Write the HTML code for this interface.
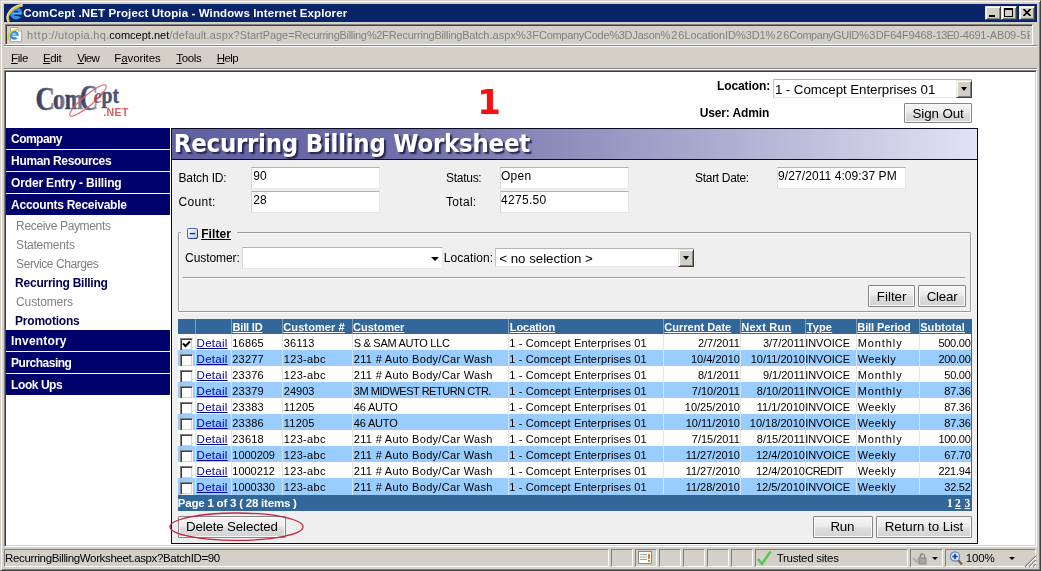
<!DOCTYPE html>
<html><head><meta charset="utf-8"><title>ComCept .NET Project Utopia - Windows Internet Explorer</title>
<style>
*{box-sizing:border-box;margin:0;padding:0}
html,body{width:1041px;height:571px;overflow:hidden;background:#d4d0c8;font-family:"Liberation Sans","DejaVu Sans",sans-serif;}
#win{position:absolute;left:0;top:0;width:1041px;height:571px;background:#d4d0c8;overflow:hidden}
.t{position:absolute;white-space:pre}
#tx{position:absolute;left:0;top:0;width:1041px;height:571px;will-change:transform}
.a{position:absolute}
.mi{position:absolute;left:6px;width:164px;height:21px;background:#00006c}
.tb{position:absolute;background:#fff;border:1px solid;border-color:#b2b2b2 #e6e6e6 #e6e6e6 #d6d6d6}
.btn{position:absolute;border:1px solid #868686;border-radius:1px;background:linear-gradient(#f6f6f6 0%,#ececec 45%,#dedede 55%,#d2d2d2 100%);box-shadow:inset 0 0 0 1px #fafafa}
.sunk{position:absolute;border:1px solid;border-color:#808080 #fff #fff #808080}
.cb{position:absolute;width:13px;height:13px;background:#fff;border:1px solid;border-color:#808080 #f4f4f4 #f4f4f4 #808080;box-shadow:inset 1px 1px 0 #404040,inset -1px -1px 0 #d4d0c8}
.ddb{position:absolute;background:#d4d0c8;border:1px solid;border-color:#e8e6e0 #404040 #404040 #e8e6e0;box-shadow:inset 1px 1px 0 #fff,inset -1px -1px 0 #808080}
.arr{position:absolute;width:0;height:0;border-left:4px solid transparent;border-right:4px solid transparent;border-top:4px solid #000}
</style></head><body>
<div id="win">
<div class="a" style="left:0px;top:0px;width:1041px;height:571px;border:1px solid;border-color:#d4d0c8 #404040 #404040 #d4d0c8;box-shadow:inset 1px 1px 0 #fff,inset -1px -1px 0 #808080"></div>
<div class="a" style="left:4px;top:4px;width:1033px;height:18px;background:#0a246a"></div>
<svg class="a" style="left:5px;top:4px" width="19" height="18" viewBox="5 4 19 18"><circle cx="16.2" cy="13.4" r="4.4" fill="none" stroke="#2f8ee6" stroke-width="3.4"/><rect x="12.5" y="12.4" width="8.5" height="2.2" fill="#56b0f6"/><path d="M17 14.8 H23 V18 L19 16.5Z" fill="#0a246a"/><path d="M8.2 20.6 C5.8 14.5 11.5 7 21.6 5.4" fill="none" stroke="#f4e9a0" stroke-width="2.6" stroke-linecap="round"/><path d="M8.6 20.4 C6.6 14.8 12 7.6 21.4 6" fill="none" stroke="#e8b820" stroke-width="1.3" stroke-linecap="round"/></svg>
<div class="ddb" style="left:985px;top:6px;width:16px;height:14px;"></div>
<div class="ddb" style="left:1001px;top:6px;width:16px;height:14px;"></div>
<div class="ddb" style="left:1019px;top:6px;width:16px;height:14px;"></div>
<div class="a" style="left:989px;top:15px;width:6px;height:2px;background:#000"></div>
<div class="a" style="left:1004px;top:8px;width:9px;height:9px;border:1px solid #000;border-top-width:2px"></div>
<svg class="a" style="left:1023px;top:9px" width="8" height="7" viewBox="0 0 8 7"><path d="M0.5 0 L7.5 7 M7.5 0 L0.5 7" stroke="#000" stroke-width="1.7" fill="none"/></svg>
<div class="a" style="left:5px;top:24px;width:1028px;height:21px;border:1px solid;border-color:#808080 #fff #fff #808080;box-shadow:inset 1px 1px 0 #404040"></div>
<svg class="a" style="left:6px;top:26px" width="18" height="18" viewBox="6 26 18 18"><path d="M10.5 27.5 H18 L21.5 31 V41.5 H10.5 Z" fill="#fff" stroke="#a8a8a0"/><path d="M18 27.5 V31 H21.5" fill="#e8e8e0" stroke="#a8a8a0"/><circle cx="14.2" cy="35.2" r="3.3" fill="none" stroke="#2f8ee6" stroke-width="2.5"/><rect x="11.5" y="34.4" width="6.3" height="1.7" fill="#56b0f6"/><path d="M15 36.1 H19 V38.5 L16 37.4Z" fill="#fff"/><path d="M8.3 39.2 C7.4 35 11 30.5 17.4 29.2" fill="none" stroke="#e8c030" stroke-width="1.6" stroke-linecap="round"/></svg>
<div class="a" style="left:4px;top:45px;width:1033px;height:2px;border-top:1px solid #808080;border-bottom:1px solid #fff"></div>
<div class="a" style="left:4px;top:68px;width:1033px;height:2px;border-top:1px solid #808080;border-bottom:1px solid #fff"></div>
<div class="a" style="left:4px;top:70px;width:1033px;height:477px;background:#fff;border:1px solid;border-color:#808080 #fff #fff #808080;box-shadow:inset 1px 1px 0 #404040,inset -1px -1px 0 #d4d0c8"></div>
<svg class="a" style="left:30px;top:76px" width="104" height="46" viewBox="30 76 104 46" font-family="'Liberation Serif',serif" font-weight="bold">
<defs><linearGradient id="lg" x1="0" x2="1" y1="0" y2="0"><stop offset="0" stop-color="#30365a"/><stop offset="0.6" stop-color="#565c7c"/><stop offset="1" stop-color="#8a90a8"/></linearGradient>
<linearGradient id="lg2" x1="0" x2="1" y1="0" y2="0"><stop offset="0" stop-color="#30365a"/><stop offset="0.5" stop-color="#5c6282"/><stop offset="1" stop-color="#a0a4ba"/></linearGradient></defs>
<text x="35.5" y="109.6" font-size="33" textLength="19.5" lengthAdjust="spacingAndGlyphs" fill="url(#lg)" stroke="url(#lg)" stroke-width="0.5">C</text>
<text x="53" y="109.2" font-size="30" textLength="12.2" lengthAdjust="spacingAndGlyphs" fill="url(#lg)" stroke="url(#lg)" stroke-width="0.5">o</text>
<text x="64.8" y="109.2" font-size="30" textLength="18.4" lengthAdjust="spacingAndGlyphs" fill="url(#lg)" stroke="url(#lg)" stroke-width="0.5">m</text>
<text x="79.8" y="109.8" font-size="35" textLength="18.5" lengthAdjust="spacingAndGlyphs" fill="url(#lg2)" stroke="url(#lg2)" stroke-width="0.3">C</text>
<text x="101.6" y="103.3" font-size="22.5" textLength="17.6" lengthAdjust="spacingAndGlyphs" fill="#4c5272" stroke="#4c5272" stroke-width="0.4">pt</text>
<ellipse cx="88" cy="100.5" rx="23.5" ry="5.2" transform="rotate(-40 88 100.5)" fill="none" stroke="#d46868" stroke-width="1.1"/>
<text x="93.5" y="103.3" font-size="21" font-style="italic" textLength="8.5" lengthAdjust="spacingAndGlyphs" fill="#9a4a66">e</text>
</svg>
<div class="a" style="left:773px;top:79px;width:199px;height:19px;background:#fff;border:1px solid;border-color:#b4b4b4 #e4e4e4 #e4e4e4 #c4c4c4"></div>
<div class="ddb" style="left:956px;top:80px;width:16px;height:18px;"></div>
<div class="arr" style="left:960.5px;top:87px;border-left-width:3.5px;border-right-width:3.5px"></div>
<div class="btn" style="left:904px;top:103px;width:68px;height:20px;"></div>
<div class="mi" style="top:128px"></div>
<div class="mi" style="top:150px"></div>
<div class="mi" style="top:172px"></div>
<div class="mi" style="top:194px"></div>
<div class="mi" style="top:330px"></div>
<div class="mi" style="top:352px"></div>
<div class="mi" style="top:374px"></div>
<div class="a" style="left:171px;top:128px;width:807px;height:416px;background:#efefef;border:1px solid #0a0a22"></div>
<div class="a" style="left:172px;top:129px;width:805px;height:31px;background:linear-gradient(90deg,#6060a2 0%,#7070aa 30%,#9090be 50%,#b8b8d8 75%,#e2e2f4 100%);border-bottom:1px solid #0a0a22"></div>
<div class="tb" style="left:251px;top:167px;width:129px;height:22px;"></div>
<div class="tb" style="left:251px;top:191px;width:129px;height:22px;"></div>
<div class="tb" style="left:500px;top:167px;width:129px;height:22px;"></div>
<div class="tb" style="left:500px;top:191px;width:129px;height:22px;"></div>
<div class="tb" style="left:777px;top:167px;width:129px;height:22px;"></div>
<div class="a" style="left:178px;top:232px;width:793px;height:80px;border:1px solid #9a9a9a;border-radius:1px;box-shadow:inset 1px 1px 0 #fbfbfb,1px 1px 0 #fbfbfb"></div>
<div class="a" style="left:181px;top:228px;width:56px;height:12px;background:#efefef"></div>
<svg class="a" style="left:187px;top:228px" width="12" height="12" viewBox="0 0 12 12"><defs><linearGradient id="cg" x1="0" y1="0" x2="1" y2="1"><stop offset="0" stop-color="#ffffff"/><stop offset="1" stop-color="#b8c4ee"/></linearGradient></defs><rect x="0.5" y="0.5" width="10" height="10" rx="1.5" fill="url(#cg)" stroke="#5566b8"/><path d="M10.5 2 V9 Q10.5 10.5 9 10.5 H2" fill="none" stroke="#2c3a8c" stroke-width="1"/><rect x="2.8" y="4.9" width="5.4" height="1.3" fill="#1c2a70"/></svg>
<div class="tb" style="left:242px;top:247px;width:201px;height:22px;"></div>
<div class="arr" style="left:431px;top:257px"></div>
<div class="a" style="left:495px;top:248px;width:199px;height:19px;background:#fff;border:1px solid;border-color:#b4b4b4 #e4e4e4 #e4e4e4 #c4c4c4"></div>
<div class="ddb" style="left:678px;top:249px;width:16px;height:18px;"></div>
<div class="arr" style="left:682.5px;top:256px;border-left-width:3.5px;border-right-width:3.5px"></div>
<div class="a" style="left:183px;top:277px;width:782px;height:2px;border-top:1px solid #9c9c9c;border-bottom:1px solid #fbfbfb"></div>
<div class="btn" style="left:868px;top:285px;width:47px;height:22px;"></div>
<div class="btn" style="left:918px;top:285px;width:48px;height:22px;"></div>
<div class="a" style="left:178px;top:319px;width:794px;height:15px;background:#336699"></div>
<div class="a" style="left:195px;top:319px;width:1px;height:15px;background:#7d9dc0"></div>
<div class="a" style="left:231px;top:319px;width:1px;height:15px;background:#7d9dc0"></div>
<div class="a" style="left:282px;top:319px;width:1px;height:15px;background:#7d9dc0"></div>
<div class="a" style="left:352px;top:319px;width:1px;height:15px;background:#7d9dc0"></div>
<div class="a" style="left:508px;top:319px;width:1px;height:15px;background:#7d9dc0"></div>
<div class="a" style="left:663px;top:319px;width:1px;height:15px;background:#7d9dc0"></div>
<div class="a" style="left:740px;top:319px;width:1px;height:15px;background:#7d9dc0"></div>
<div class="a" style="left:805px;top:319px;width:1px;height:15px;background:#7d9dc0"></div>
<div class="a" style="left:856px;top:319px;width:1px;height:15px;background:#7d9dc0"></div>
<div class="a" style="left:919px;top:319px;width:1px;height:15px;background:#7d9dc0"></div>
<div class="a" style="left:178px;top:334px;width:794px;height:16px;background:#fff"></div>
<div class="a" style="left:195px;top:334px;width:1px;height:16px;background:#e4e4e4"></div>
<div class="a" style="left:231px;top:334px;width:1px;height:16px;background:#e4e4e4"></div>
<div class="a" style="left:282px;top:334px;width:1px;height:16px;background:#e4e4e4"></div>
<div class="a" style="left:352px;top:334px;width:1px;height:16px;background:#e4e4e4"></div>
<div class="a" style="left:508px;top:334px;width:1px;height:16px;background:#e4e4e4"></div>
<div class="a" style="left:663px;top:334px;width:1px;height:16px;background:#e4e4e4"></div>
<div class="a" style="left:740px;top:334px;width:1px;height:16px;background:#e4e4e4"></div>
<div class="a" style="left:805px;top:334px;width:1px;height:16px;background:#e4e4e4"></div>
<div class="a" style="left:856px;top:334px;width:1px;height:16px;background:#e4e4e4"></div>
<div class="a" style="left:919px;top:334px;width:1px;height:16px;background:#e4e4e4"></div>
<div class="cb" style="left:180px;top:338px"></div>
<svg class="a" style="left:182px;top:340px" width="9" height="9" viewBox="0 0 9 9"><path d="M1 3.5 L3.5 6 L8 1.5" stroke="#000" stroke-width="2" fill="none"/></svg>
<div class="a" style="left:178px;top:350px;width:794px;height:16px;background:#99ccff"></div>
<div class="a" style="left:195px;top:350px;width:1px;height:16px;background:#cfe6ff"></div>
<div class="a" style="left:231px;top:350px;width:1px;height:16px;background:#cfe6ff"></div>
<div class="a" style="left:282px;top:350px;width:1px;height:16px;background:#cfe6ff"></div>
<div class="a" style="left:352px;top:350px;width:1px;height:16px;background:#cfe6ff"></div>
<div class="a" style="left:508px;top:350px;width:1px;height:16px;background:#cfe6ff"></div>
<div class="a" style="left:663px;top:350px;width:1px;height:16px;background:#cfe6ff"></div>
<div class="a" style="left:740px;top:350px;width:1px;height:16px;background:#cfe6ff"></div>
<div class="a" style="left:805px;top:350px;width:1px;height:16px;background:#cfe6ff"></div>
<div class="a" style="left:856px;top:350px;width:1px;height:16px;background:#cfe6ff"></div>
<div class="a" style="left:919px;top:350px;width:1px;height:16px;background:#cfe6ff"></div>
<div class="cb" style="left:180px;top:354px"></div>
<div class="a" style="left:178px;top:366px;width:794px;height:16px;background:#fff"></div>
<div class="a" style="left:195px;top:366px;width:1px;height:16px;background:#e4e4e4"></div>
<div class="a" style="left:231px;top:366px;width:1px;height:16px;background:#e4e4e4"></div>
<div class="a" style="left:282px;top:366px;width:1px;height:16px;background:#e4e4e4"></div>
<div class="a" style="left:352px;top:366px;width:1px;height:16px;background:#e4e4e4"></div>
<div class="a" style="left:508px;top:366px;width:1px;height:16px;background:#e4e4e4"></div>
<div class="a" style="left:663px;top:366px;width:1px;height:16px;background:#e4e4e4"></div>
<div class="a" style="left:740px;top:366px;width:1px;height:16px;background:#e4e4e4"></div>
<div class="a" style="left:805px;top:366px;width:1px;height:16px;background:#e4e4e4"></div>
<div class="a" style="left:856px;top:366px;width:1px;height:16px;background:#e4e4e4"></div>
<div class="a" style="left:919px;top:366px;width:1px;height:16px;background:#e4e4e4"></div>
<div class="cb" style="left:180px;top:370px"></div>
<div class="a" style="left:178px;top:382px;width:794px;height:16px;background:#99ccff"></div>
<div class="a" style="left:195px;top:382px;width:1px;height:16px;background:#cfe6ff"></div>
<div class="a" style="left:231px;top:382px;width:1px;height:16px;background:#cfe6ff"></div>
<div class="a" style="left:282px;top:382px;width:1px;height:16px;background:#cfe6ff"></div>
<div class="a" style="left:352px;top:382px;width:1px;height:16px;background:#cfe6ff"></div>
<div class="a" style="left:508px;top:382px;width:1px;height:16px;background:#cfe6ff"></div>
<div class="a" style="left:663px;top:382px;width:1px;height:16px;background:#cfe6ff"></div>
<div class="a" style="left:740px;top:382px;width:1px;height:16px;background:#cfe6ff"></div>
<div class="a" style="left:805px;top:382px;width:1px;height:16px;background:#cfe6ff"></div>
<div class="a" style="left:856px;top:382px;width:1px;height:16px;background:#cfe6ff"></div>
<div class="a" style="left:919px;top:382px;width:1px;height:16px;background:#cfe6ff"></div>
<div class="cb" style="left:180px;top:386px"></div>
<div class="a" style="left:178px;top:398px;width:794px;height:16px;background:#fff"></div>
<div class="a" style="left:195px;top:398px;width:1px;height:16px;background:#e4e4e4"></div>
<div class="a" style="left:231px;top:398px;width:1px;height:16px;background:#e4e4e4"></div>
<div class="a" style="left:282px;top:398px;width:1px;height:16px;background:#e4e4e4"></div>
<div class="a" style="left:352px;top:398px;width:1px;height:16px;background:#e4e4e4"></div>
<div class="a" style="left:508px;top:398px;width:1px;height:16px;background:#e4e4e4"></div>
<div class="a" style="left:663px;top:398px;width:1px;height:16px;background:#e4e4e4"></div>
<div class="a" style="left:740px;top:398px;width:1px;height:16px;background:#e4e4e4"></div>
<div class="a" style="left:805px;top:398px;width:1px;height:16px;background:#e4e4e4"></div>
<div class="a" style="left:856px;top:398px;width:1px;height:16px;background:#e4e4e4"></div>
<div class="a" style="left:919px;top:398px;width:1px;height:16px;background:#e4e4e4"></div>
<div class="cb" style="left:180px;top:402px"></div>
<div class="a" style="left:178px;top:414px;width:794px;height:16px;background:#99ccff"></div>
<div class="a" style="left:195px;top:414px;width:1px;height:16px;background:#cfe6ff"></div>
<div class="a" style="left:231px;top:414px;width:1px;height:16px;background:#cfe6ff"></div>
<div class="a" style="left:282px;top:414px;width:1px;height:16px;background:#cfe6ff"></div>
<div class="a" style="left:352px;top:414px;width:1px;height:16px;background:#cfe6ff"></div>
<div class="a" style="left:508px;top:414px;width:1px;height:16px;background:#cfe6ff"></div>
<div class="a" style="left:663px;top:414px;width:1px;height:16px;background:#cfe6ff"></div>
<div class="a" style="left:740px;top:414px;width:1px;height:16px;background:#cfe6ff"></div>
<div class="a" style="left:805px;top:414px;width:1px;height:16px;background:#cfe6ff"></div>
<div class="a" style="left:856px;top:414px;width:1px;height:16px;background:#cfe6ff"></div>
<div class="a" style="left:919px;top:414px;width:1px;height:16px;background:#cfe6ff"></div>
<div class="cb" style="left:180px;top:418px"></div>
<div class="a" style="left:178px;top:430px;width:794px;height:16px;background:#fff"></div>
<div class="a" style="left:195px;top:430px;width:1px;height:16px;background:#e4e4e4"></div>
<div class="a" style="left:231px;top:430px;width:1px;height:16px;background:#e4e4e4"></div>
<div class="a" style="left:282px;top:430px;width:1px;height:16px;background:#e4e4e4"></div>
<div class="a" style="left:352px;top:430px;width:1px;height:16px;background:#e4e4e4"></div>
<div class="a" style="left:508px;top:430px;width:1px;height:16px;background:#e4e4e4"></div>
<div class="a" style="left:663px;top:430px;width:1px;height:16px;background:#e4e4e4"></div>
<div class="a" style="left:740px;top:430px;width:1px;height:16px;background:#e4e4e4"></div>
<div class="a" style="left:805px;top:430px;width:1px;height:16px;background:#e4e4e4"></div>
<div class="a" style="left:856px;top:430px;width:1px;height:16px;background:#e4e4e4"></div>
<div class="a" style="left:919px;top:430px;width:1px;height:16px;background:#e4e4e4"></div>
<div class="cb" style="left:180px;top:434px"></div>
<div class="a" style="left:178px;top:446px;width:794px;height:16px;background:#99ccff"></div>
<div class="a" style="left:195px;top:446px;width:1px;height:16px;background:#cfe6ff"></div>
<div class="a" style="left:231px;top:446px;width:1px;height:16px;background:#cfe6ff"></div>
<div class="a" style="left:282px;top:446px;width:1px;height:16px;background:#cfe6ff"></div>
<div class="a" style="left:352px;top:446px;width:1px;height:16px;background:#cfe6ff"></div>
<div class="a" style="left:508px;top:446px;width:1px;height:16px;background:#cfe6ff"></div>
<div class="a" style="left:663px;top:446px;width:1px;height:16px;background:#cfe6ff"></div>
<div class="a" style="left:740px;top:446px;width:1px;height:16px;background:#cfe6ff"></div>
<div class="a" style="left:805px;top:446px;width:1px;height:16px;background:#cfe6ff"></div>
<div class="a" style="left:856px;top:446px;width:1px;height:16px;background:#cfe6ff"></div>
<div class="a" style="left:919px;top:446px;width:1px;height:16px;background:#cfe6ff"></div>
<div class="cb" style="left:180px;top:450px"></div>
<div class="a" style="left:178px;top:462px;width:794px;height:16px;background:#fff"></div>
<div class="a" style="left:195px;top:462px;width:1px;height:16px;background:#e4e4e4"></div>
<div class="a" style="left:231px;top:462px;width:1px;height:16px;background:#e4e4e4"></div>
<div class="a" style="left:282px;top:462px;width:1px;height:16px;background:#e4e4e4"></div>
<div class="a" style="left:352px;top:462px;width:1px;height:16px;background:#e4e4e4"></div>
<div class="a" style="left:508px;top:462px;width:1px;height:16px;background:#e4e4e4"></div>
<div class="a" style="left:663px;top:462px;width:1px;height:16px;background:#e4e4e4"></div>
<div class="a" style="left:740px;top:462px;width:1px;height:16px;background:#e4e4e4"></div>
<div class="a" style="left:805px;top:462px;width:1px;height:16px;background:#e4e4e4"></div>
<div class="a" style="left:856px;top:462px;width:1px;height:16px;background:#e4e4e4"></div>
<div class="a" style="left:919px;top:462px;width:1px;height:16px;background:#e4e4e4"></div>
<div class="cb" style="left:180px;top:466px"></div>
<div class="a" style="left:178px;top:478px;width:794px;height:17px;background:#99ccff"></div>
<div class="a" style="left:195px;top:478px;width:1px;height:17px;background:#cfe6ff"></div>
<div class="a" style="left:231px;top:478px;width:1px;height:17px;background:#cfe6ff"></div>
<div class="a" style="left:282px;top:478px;width:1px;height:17px;background:#cfe6ff"></div>
<div class="a" style="left:352px;top:478px;width:1px;height:17px;background:#cfe6ff"></div>
<div class="a" style="left:508px;top:478px;width:1px;height:17px;background:#cfe6ff"></div>
<div class="a" style="left:663px;top:478px;width:1px;height:17px;background:#cfe6ff"></div>
<div class="a" style="left:740px;top:478px;width:1px;height:17px;background:#cfe6ff"></div>
<div class="a" style="left:805px;top:478px;width:1px;height:17px;background:#cfe6ff"></div>
<div class="a" style="left:856px;top:478px;width:1px;height:17px;background:#cfe6ff"></div>
<div class="a" style="left:919px;top:478px;width:1px;height:17px;background:#cfe6ff"></div>
<div class="cb" style="left:180px;top:482px"></div>
<div class="a" style="left:971px;top:334px;width:1px;height:161px;background:#336699"></div>
<div class="a" style="left:178px;top:495px;width:794px;height:16px;background:#336699"></div>
<div class="btn" style="left:178px;top:516px;width:108px;height:22px;"></div>
<svg class="a" style="left:166px;top:510px" width="142" height="34" viewBox="0 0 142 34"><ellipse cx="70.5" cy="16.7" rx="66.5" ry="13.7" fill="none" stroke="#c4243a" stroke-width="1.3"/></svg>
<div class="btn" style="left:813px;top:516px;width:60px;height:22px;"></div>
<div class="btn" style="left:876px;top:516px;width:96px;height:22px;"></div>
<div class="sunk" style="left:4px;top:549px;width:605px;height:18px;"></div>
<div class="sunk" style="left:611px;top:549px;width:22px;height:18px;"></div>
<div class="sunk" style="left:635px;top:549px;width:22px;height:18px;"></div>
<div class="sunk" style="left:659px;top:549px;width:22px;height:18px;"></div>
<div class="sunk" style="left:683px;top:549px;width:22px;height:18px;"></div>
<div class="sunk" style="left:707px;top:549px;width:22px;height:18px;"></div>
<div class="sunk" style="left:731px;top:549px;width:22px;height:18px;"></div>
<div class="sunk" style="left:755px;top:549px;width:153px;height:18px;"></div>
<div class="sunk" style="left:910px;top:549px;width:33px;height:18px;"></div>
<div class="sunk" style="left:945px;top:549px;width:91px;height:18px;"></div>
<svg class="a" style="left:638px;top:551px" width="15" height="14" viewBox="0 0 15 14"><rect x="0.5" y="0.5" width="13" height="12" fill="#fff" stroke="#8a8a8a"/><path d="M2 3.5H9M2 6H9M2 8.5H9" stroke="#9aa" stroke-width="1"/><rect x="10" y="3" width="2" height="5" fill="#e08020"/><rect x="10" y="9" width="2" height="2" fill="#e08020"/></svg>
<svg class="a" style="left:757px;top:550px" width="15" height="16" viewBox="0 0 15 16"><path d="M1 9 L5 14 L13.5 1.5" stroke="#58c452" stroke-width="2.4" fill="none"/></svg>
<svg class="a" style="left:912px;top:550px" width="16" height="16" viewBox="0 0 16 16"><path d="M1 8 L5 12 L10 3" stroke="#b0aea8" stroke-width="2.2" fill="none"/><rect x="7" y="8" width="7" height="6" fill="#a8a6a0" stroke="#8a8884"/><path d="M8.5 8 V6 a2 2 0 0 1 4 0 V8" fill="none" stroke="#8a8884" stroke-width="1.2"/></svg>
<div class="arr" style="left:932px;top:557px;border-left-width:3px;border-right-width:3px;border-top-width:3px"></div>
<svg class="a" style="left:949px;top:550px" width="15" height="16" viewBox="0 0 15 16"><path d="M8.5 9.5 L13 14.5" stroke="#8a5a30" stroke-width="2.2"/><circle cx="6" cy="6.5" r="4.6" fill="#eaf2ff" stroke="#5a82c8" stroke-width="1.2"/><path d="M6 3.8V9.2M3.3 6.5H8.7" stroke="#1848c0" stroke-width="1.8"/></svg>
<div class="arr" style="left:1008.5px;top:557px;border-left-width:3px;border-right-width:3px;border-top-width:3px"></div>
<svg class="a" style="left:1024px;top:555px" width="13" height="13" viewBox="0 0 13 13"><path d="M12 1 L1 12 M12 5 L5 12 M12 9 L9 12" stroke="#808080" stroke-width="1.2"/><path d="M12 2 L2 12 M12 6 L6 12 M12 10 L10 12" stroke="#fff" stroke-width="1"/></svg>
<div id="tx">
<div class="t" style="left:23.30px;top:8px;font-size:11.5px;line-height:11.5px;color:#fff;font-weight:bold;letter-spacing:0.119px;">ComCept .NET Project Utopia - Windows Internet Explorer</div>
<div class="t" style="left:27.00px;top:30px;font-size:11px;line-height:11px;color:#808080;letter-spacing:0.723px;">http:</div>
<div class="t" style="left:51.30px;top:30px;font-size:11px;line-height:11px;color:#808080;letter-spacing:0.324px;">//utopia.hq.</div>
<div class="t" style="left:109.30px;top:30px;font-size:11px;line-height:11px;color:#000;letter-spacing:0.008px;">comcept.net</div>
<div class="t" style="left:169.30px;top:30px;font-size:11px;line-height:11px;color:#808080;letter-spacing:0.146px;">/default.aspx?</div>
<div class="t" style="left:239.70px;top:30px;font-size:11px;line-height:11px;color:#808080;letter-spacing:-0.049px;">StartPage=</div>
<div class="t" style="left:294.60px;top:30px;font-size:11px;line-height:11px;color:#808080;letter-spacing:-0.310px;">RecurringBilling</div>
<div class="t" style="left:367.00px;top:30px;font-size:11px;line-height:11px;color:#808080;letter-spacing:-0.412px;">%2F</div>
<div class="t" style="left:388.80px;top:30px;font-size:11px;line-height:11px;color:#808080;letter-spacing:-0.224px;">RecurringBillingBatch</div>
<div class="t" style="left:489.50px;top:30px;font-size:11px;line-height:11px;color:#808080;letter-spacing:0.051px;">.aspx</div>
<div class="t" style="left:516.00px;top:30px;font-size:11px;line-height:11px;color:#808080;letter-spacing:0.188px;">%3F</div>
<div class="t" style="left:539.00px;top:30px;font-size:11px;line-height:11px;color:#808080;letter-spacing:-0.287px;">CompanyCode</div>
<div class="t" style="left:609.50px;top:30px;font-size:11px;line-height:11px;color:#808080;letter-spacing:-0.422px;">%3D</div>
<div class="t" style="left:632.50px;top:30px;font-size:11px;line-height:11px;color:#808080;letter-spacing:-0.315px;">Jason</div>
<div class="t" style="left:660.60px;top:30px;font-size:11px;line-height:11px;color:#808080;letter-spacing:0.884px;">%26</div>
<div class="t" style="left:684.40px;top:30px;font-size:11px;line-height:11px;color:#808080;letter-spacing:-0.110px;">LocationID</div>
<div class="t" style="left:736.00px;top:30px;font-size:11px;line-height:11px;color:#808080;letter-spacing:-0.122px;">%3D</div>
<div class="t" style="left:759.60px;top:30px;font-size:11px;line-height:11px;color:#808080;">1</div>
<div class="t" style="left:765.60px;top:30px;font-size:11px;line-height:11px;color:#808080;letter-spacing:0.834px;">%26</div>
<div class="t" style="left:789.30px;top:30px;font-size:11px;line-height:11px;color:#808080;letter-spacing:-0.468px;">CompanyGUID</div>
<div class="t" style="left:859.20px;top:30px;font-size:11px;line-height:11px;color:#808080;letter-spacing:0.278px;">%3D</div>
<div class="t" style="left:883.60px;top:30px;font-size:11px;line-height:11px;color:#808080;letter-spacing:-0.165px;">F64F9468</div>
<div class="t" style="left:932.60px;top:30px;font-size:11px;line-height:11px;color:#808080;letter-spacing:-0.615px;">-13E0</div>
<div class="t" style="left:959.50px;top:30px;font-size:11px;line-height:11px;color:#808080;letter-spacing:-0.310px;">-4691</div>
<div class="t" style="left:986.40px;top:30px;font-size:11px;line-height:11px;color:#808080;letter-spacing:-0.195px;">-AB09</div>
<div class="t" style="left:1016.20px;top:30px;font-size:11px;line-height:11px;color:#808080;letter-spacing:0.519px;">-5</div>
<div class="t" style="left:1026.70px;top:30px;font-size:11px;line-height:11px;color:#808080;width:3px;overflow:hidden;">E</div>
<div class="t" style="left:11.10px;top:53px;font-size:11.5px;line-height:11.5px;color:#000;letter-spacing:-0.444px;"><u>F</u>ile</div>
<div class="t" style="left:43.00px;top:53px;font-size:11.5px;line-height:11.5px;color:#000;letter-spacing:-0.376px;"><u>E</u>dit</div>
<div class="t" style="left:77.30px;top:53px;font-size:11.5px;line-height:11.5px;color:#000;letter-spacing:-0.773px;"><u>V</u>iew</div>
<div class="t" style="left:114.30px;top:53px;font-size:11.5px;line-height:11.5px;color:#000;letter-spacing:-0.112px;">F<u>a</u>vorites</div>
<div class="t" style="left:176.30px;top:53px;font-size:11.5px;line-height:11.5px;color:#000;letter-spacing:-0.365px;"><u>T</u>ools</div>
<div class="t" style="left:216.80px;top:53px;font-size:11.5px;line-height:11.5px;color:#000;letter-spacing:-0.585px;"><u>H</u>elp</div>
<div class="t" style="left:103.30px;top:107px;font-size:10.5px;line-height:10.5px;color:#d66060;font-weight:bold;letter-spacing:0.393px;">.NET</div>
<div class="t" style="left:477.20px;top:85px;font-size:34px;line-height:34px;color:#f81010;font-weight:bold;font-family:'DejaVu Sans',sans-serif;">1</div>
<div class="t" style="left:716.90px;top:80px;font-size:12px;line-height:12px;color:#000;font-weight:bold;letter-spacing:-0.075px;">Location:</div>
<div class="t" style="left:774.90px;top:83px;font-size:13.33px;line-height:13.33px;color:#000;letter-spacing:-0.073px;">1 - Comcept Enterprises 01</div>
<div class="t" style="left:699.70px;top:107px;font-size:12px;line-height:12px;color:#000;font-weight:bold;letter-spacing:-0.131px;">User: Admin</div>
<div class="t" style="left:912.60px;top:107px;font-size:13.33px;line-height:13.33px;color:#000;letter-spacing:-0.111px;">Sign Out</div>
<div class="t" style="left:11.10px;top:133px;font-size:12px;line-height:12px;color:#fff;font-weight:bold;letter-spacing:-0.548px;">Company</div>
<div class="t" style="left:11.10px;top:155px;font-size:12px;line-height:12px;color:#fff;font-weight:bold;letter-spacing:-0.348px;">Human Resources</div>
<div class="t" style="left:11.10px;top:177px;font-size:12px;line-height:12px;color:#fff;font-weight:bold;letter-spacing:-0.171px;">Order Entry - Billing</div>
<div class="t" style="left:11.10px;top:199px;font-size:12px;line-height:12px;color:#fff;font-weight:bold;letter-spacing:-0.273px;">Accounts Receivable</div>
<div class="t" style="left:11.10px;top:335px;font-size:12px;line-height:12px;color:#fff;font-weight:bold;letter-spacing:0.173px;">Inventory</div>
<div class="t" style="left:11.10px;top:357px;font-size:12px;line-height:12px;color:#fff;font-weight:bold;letter-spacing:-0.507px;">Purchasing</div>
<div class="t" style="left:11.10px;top:379px;font-size:12px;line-height:12px;color:#fff;font-weight:bold;letter-spacing:-0.439px;">Look Ups</div>
<div class="t" style="left:16.10px;top:220px;font-size:12px;line-height:12px;color:#808080;letter-spacing:-0.350px;">Receive Payments</div>
<div class="t" style="left:16.10px;top:239px;font-size:12px;line-height:12px;color:#808080;letter-spacing:-0.211px;">Statements</div>
<div class="t" style="left:16.10px;top:258px;font-size:12px;line-height:12px;color:#808080;letter-spacing:-0.430px;">Service Charges</div>
<div class="t" style="left:15.10px;top:277px;font-size:12px;line-height:12px;color:#000050;font-weight:bold;letter-spacing:-0.243px;">Recurring Billing</div>
<div class="t" style="left:16.10px;top:296px;font-size:12px;line-height:12px;color:#808080;letter-spacing:-0.139px;">Customers</div>
<div class="t" style="left:15.10px;top:315px;font-size:12px;line-height:12px;color:#000050;font-weight:bold;letter-spacing:-0.230px;">Promotions</div>
<div class="t" style="left:173.80px;top:131px;font-size:25.5px;line-height:25.5px;color:#fff;font-weight:bold;font-family:'DejaVu Sans Condensed',sans-serif;letter-spacing:-0.250px;text-shadow:2px 2px 1.5px #26264e;">Recurring Billing Worksheet</div>
<div class="t" style="left:178.50px;top:172px;font-size:12px;line-height:12px;color:#000;letter-spacing:-0.145px;">Batch ID:</div>
<div class="t" style="left:178.50px;top:196px;font-size:12px;line-height:12px;color:#000;letter-spacing:0.308px;">Count:</div>
<div class="t" style="left:446.00px;top:172px;font-size:12px;line-height:12px;color:#000;letter-spacing:-0.277px;">Status:</div>
<div class="t" style="left:446.00px;top:196px;font-size:12px;line-height:12px;color:#000;letter-spacing:0.302px;">Total:</div>
<div class="t" style="left:695.10px;top:172px;font-size:12px;line-height:12px;color:#000;letter-spacing:-0.326px;">Start Date:</div>
<div class="t" style="left:253.30px;top:170px;font-size:12px;line-height:12px;color:#000;">90</div>
<div class="t" style="left:253.30px;top:194px;font-size:12px;line-height:12px;color:#000;">28</div>
<div class="t" style="left:501.00px;top:170px;font-size:12px;line-height:12px;color:#000;letter-spacing:0.280px;">Open</div>
<div class="t" style="left:501.00px;top:194px;font-size:12px;line-height:12px;color:#000;letter-spacing:0.302px;">4275.50</div>
<div class="t" style="left:778.10px;top:170px;font-size:12px;line-height:12px;color:#000;letter-spacing:0.074px;">9/27/2011 4:09:37 PM</div>
<div class="t" style="left:201.20px;top:228px;font-size:12px;line-height:12px;color:#000;font-weight:bold;letter-spacing:0.091px;text-decoration:underline;">Filter</div>
<div class="t" style="left:185.10px;top:252px;font-size:12px;line-height:12px;color:#000;letter-spacing:-0.070px;">Customer:</div>
<div class="t" style="left:443.70px;top:252px;font-size:12px;line-height:12px;color:#000;letter-spacing:0.100px;">Location:</div>
<div class="t" style="left:499.30px;top:252px;font-size:13.33px;line-height:13.33px;color:#000;letter-spacing:-0.034px;">&lt; no selection &gt;</div>
<div class="t" style="left:876.80px;top:290px;font-size:13.33px;line-height:13.33px;color:#000;letter-spacing:0.015px;">Filter</div>
<div class="t" style="left:926.70px;top:290px;font-size:13.33px;line-height:13.33px;color:#000;letter-spacing:-0.215px;">Clear</div>
<div class="t" style="left:232.50px;top:322px;font-size:11px;line-height:11px;color:#fff;font-weight:bold;letter-spacing:-0.162px;text-decoration:underline;">Bill ID</div>
<div class="t" style="left:283.30px;top:322px;font-size:11px;line-height:11px;color:#fff;font-weight:bold;letter-spacing:0.097px;text-decoration:underline;">Customer #</div>
<div class="t" style="left:353.00px;top:322px;font-size:11px;line-height:11px;color:#fff;font-weight:bold;letter-spacing:0.008px;text-decoration:underline;">Customer</div>
<div class="t" style="left:509.80px;top:322px;font-size:11px;line-height:11px;color:#fff;font-weight:bold;letter-spacing:-0.063px;text-decoration:underline;">Location</div>
<div class="t" style="left:664.30px;top:322px;font-size:11px;line-height:11px;color:#fff;font-weight:bold;letter-spacing:0.025px;text-decoration:underline;">Current Date</div>
<div class="t" style="left:741.30px;top:322px;font-size:11px;line-height:11px;color:#fff;font-weight:bold;letter-spacing:0.231px;text-decoration:underline;">Next Run</div>
<div class="t" style="left:806.60px;top:322px;font-size:11px;line-height:11px;color:#fff;font-weight:bold;letter-spacing:0.180px;text-decoration:underline;">Type</div>
<div class="t" style="left:857.30px;top:322px;font-size:11px;line-height:11px;color:#fff;font-weight:bold;letter-spacing:-0.101px;text-decoration:underline;">Bill Period</div>
<div class="t" style="left:920.20px;top:322px;font-size:11px;line-height:11px;color:#fff;font-weight:bold;letter-spacing:0.086px;text-decoration:underline;">Subtotal</div>
<div class="t" style="left:196.60px;top:338px;font-size:11.5px;line-height:11.5px;color:#0000a0;letter-spacing:0.259px;text-decoration:underline;">Detail</div>
<div class="t" style="left:232.30px;top:338px;font-size:11px;line-height:11px;color:#000;letter-spacing:0.177px;">16865</div>
<div class="t" style="left:283.80px;top:338px;font-size:11px;line-height:11px;color:#000;letter-spacing:0.205px;">36113</div>
<div class="t" style="left:353.80px;top:338px;font-size:11px;line-height:11px;color:#000;letter-spacing:-0.305px;">S &amp; SAM AUTO LLC</div>
<div class="t" style="left:509.30px;top:338px;font-size:11px;line-height:11px;color:#000;letter-spacing:0.140px;">1 - Comcept Enterprises 01</div>
<div class="t" style="left:697.88px;top:338px;font-size:11px;line-height:11px;color:#000;">2/7/2011</div>
<div class="t" style="left:762.88px;top:338px;font-size:11px;line-height:11px;color:#000;">3/7/2011</div>
<div class="t" style="left:805.30px;top:338px;font-size:11px;line-height:11px;color:#000;letter-spacing:-0.089px;">INVOICE</div>
<div class="t" style="left:857.70px;top:338px;font-size:11px;line-height:11px;color:#000;letter-spacing:0.911px;">Monthly</div>
<div class="t" style="left:938.39px;top:338px;font-size:11px;line-height:11px;color:#000;letter-spacing:-0.250px;">500.00</div>
<div class="t" style="left:196.60px;top:354px;font-size:11.5px;line-height:11.5px;color:#0000a0;letter-spacing:0.259px;text-decoration:underline;">Detail</div>
<div class="t" style="left:232.30px;top:354px;font-size:11px;line-height:11px;color:#000;letter-spacing:0.177px;">23277</div>
<div class="t" style="left:283.80px;top:354px;font-size:11px;line-height:11px;color:#000;letter-spacing:0.306px;">123-abc</div>
<div class="t" style="left:353.80px;top:354px;font-size:11px;line-height:11px;color:#000;letter-spacing:0.310px;">211 # Auto Body/Car Wash</div>
<div class="t" style="left:509.30px;top:354px;font-size:11px;line-height:11px;color:#000;letter-spacing:0.140px;">1 - Comcept Enterprises 01</div>
<div class="t" style="left:690.96px;top:354px;font-size:11px;line-height:11px;color:#000;">10/4/2010</div>
<div class="t" style="left:750.65px;top:354px;font-size:11px;line-height:11px;color:#000;">10/11/2010</div>
<div class="t" style="left:805.30px;top:354px;font-size:11px;line-height:11px;color:#000;letter-spacing:-0.089px;">INVOICE</div>
<div class="t" style="left:857.70px;top:354px;font-size:11px;line-height:11px;color:#000;letter-spacing:0.425px;">Weekly</div>
<div class="t" style="left:938.39px;top:354px;font-size:11px;line-height:11px;color:#000;letter-spacing:-0.250px;">200.00</div>
<div class="t" style="left:196.60px;top:370px;font-size:11.5px;line-height:11.5px;color:#0000a0;letter-spacing:0.259px;text-decoration:underline;">Detail</div>
<div class="t" style="left:232.30px;top:370px;font-size:11px;line-height:11px;color:#000;letter-spacing:0.177px;">23376</div>
<div class="t" style="left:283.80px;top:370px;font-size:11px;line-height:11px;color:#000;letter-spacing:0.306px;">123-abc</div>
<div class="t" style="left:353.80px;top:370px;font-size:11px;line-height:11px;color:#000;letter-spacing:0.310px;">211 # Auto Body/Car Wash</div>
<div class="t" style="left:509.30px;top:370px;font-size:11px;line-height:11px;color:#000;letter-spacing:0.140px;">1 - Comcept Enterprises 01</div>
<div class="t" style="left:697.88px;top:370px;font-size:11px;line-height:11px;color:#000;">8/1/2011</div>
<div class="t" style="left:762.88px;top:370px;font-size:11px;line-height:11px;color:#000;">9/1/2011</div>
<div class="t" style="left:805.30px;top:370px;font-size:11px;line-height:11px;color:#000;letter-spacing:-0.089px;">INVOICE</div>
<div class="t" style="left:857.70px;top:370px;font-size:11px;line-height:11px;color:#000;letter-spacing:0.911px;">Monthly</div>
<div class="t" style="left:944.27px;top:370px;font-size:11px;line-height:11px;color:#000;letter-spacing:-0.250px;">50.00</div>
<div class="t" style="left:196.60px;top:386px;font-size:11.5px;line-height:11.5px;color:#0000a0;letter-spacing:0.259px;text-decoration:underline;">Detail</div>
<div class="t" style="left:232.30px;top:386px;font-size:11px;line-height:11px;color:#000;letter-spacing:0.177px;">23379</div>
<div class="t" style="left:283.80px;top:386px;font-size:11px;line-height:11px;color:#000;">24903</div>
<div class="t" style="left:353.80px;top:386px;font-size:11px;line-height:11px;color:#000;letter-spacing:-0.480px;">3M MIDWEST RETURN CTR.</div>
<div class="t" style="left:509.30px;top:386px;font-size:11px;line-height:11px;color:#000;letter-spacing:0.140px;">1 - Comcept Enterprises 01</div>
<div class="t" style="left:691.78px;top:386px;font-size:11px;line-height:11px;color:#000;">7/10/2011</div>
<div class="t" style="left:756.78px;top:386px;font-size:11px;line-height:11px;color:#000;">8/10/2011</div>
<div class="t" style="left:805.30px;top:386px;font-size:11px;line-height:11px;color:#000;letter-spacing:-0.089px;">INVOICE</div>
<div class="t" style="left:857.70px;top:386px;font-size:11px;line-height:11px;color:#000;letter-spacing:0.911px;">Monthly</div>
<div class="t" style="left:944.27px;top:386px;font-size:11px;line-height:11px;color:#000;letter-spacing:-0.250px;">87.36</div>
<div class="t" style="left:196.60px;top:402px;font-size:11.5px;line-height:11.5px;color:#0000a0;letter-spacing:0.259px;text-decoration:underline;">Detail</div>
<div class="t" style="left:232.30px;top:402px;font-size:11px;line-height:11px;color:#000;letter-spacing:0.177px;">23383</div>
<div class="t" style="left:283.80px;top:402px;font-size:11px;line-height:11px;color:#000;letter-spacing:0.205px;">11205</div>
<div class="t" style="left:353.80px;top:402px;font-size:11px;line-height:11px;color:#000;letter-spacing:-0.191px;">46 AUTO</div>
<div class="t" style="left:509.30px;top:402px;font-size:11px;line-height:11px;color:#000;letter-spacing:0.140px;">1 - Comcept Enterprises 01</div>
<div class="t" style="left:684.84px;top:402px;font-size:11px;line-height:11px;color:#000;">10/25/2010</div>
<div class="t" style="left:756.78px;top:402px;font-size:11px;line-height:11px;color:#000;">11/1/2010</div>
<div class="t" style="left:805.30px;top:402px;font-size:11px;line-height:11px;color:#000;letter-spacing:-0.089px;">INVOICE</div>
<div class="t" style="left:857.70px;top:402px;font-size:11px;line-height:11px;color:#000;letter-spacing:0.425px;">Weekly</div>
<div class="t" style="left:944.27px;top:402px;font-size:11px;line-height:11px;color:#000;letter-spacing:-0.250px;">87.36</div>
<div class="t" style="left:196.60px;top:418px;font-size:11.5px;line-height:11.5px;color:#0000a0;letter-spacing:0.259px;text-decoration:underline;">Detail</div>
<div class="t" style="left:232.30px;top:418px;font-size:11px;line-height:11px;color:#000;letter-spacing:0.177px;">23386</div>
<div class="t" style="left:283.80px;top:418px;font-size:11px;line-height:11px;color:#000;letter-spacing:0.205px;">11205</div>
<div class="t" style="left:353.80px;top:418px;font-size:11px;line-height:11px;color:#000;letter-spacing:-0.191px;">46 AUTO</div>
<div class="t" style="left:509.30px;top:418px;font-size:11px;line-height:11px;color:#000;letter-spacing:0.140px;">1 - Comcept Enterprises 01</div>
<div class="t" style="left:685.65px;top:418px;font-size:11px;line-height:11px;color:#000;">10/11/2010</div>
<div class="t" style="left:749.84px;top:418px;font-size:11px;line-height:11px;color:#000;">10/18/2010</div>
<div class="t" style="left:805.30px;top:418px;font-size:11px;line-height:11px;color:#000;letter-spacing:-0.089px;">INVOICE</div>
<div class="t" style="left:857.70px;top:418px;font-size:11px;line-height:11px;color:#000;letter-spacing:0.425px;">Weekly</div>
<div class="t" style="left:944.27px;top:418px;font-size:11px;line-height:11px;color:#000;letter-spacing:-0.250px;">87.36</div>
<div class="t" style="left:196.60px;top:434px;font-size:11.5px;line-height:11.5px;color:#0000a0;letter-spacing:0.259px;text-decoration:underline;">Detail</div>
<div class="t" style="left:232.30px;top:434px;font-size:11px;line-height:11px;color:#000;letter-spacing:0.177px;">23618</div>
<div class="t" style="left:283.80px;top:434px;font-size:11px;line-height:11px;color:#000;letter-spacing:0.306px;">123-abc</div>
<div class="t" style="left:353.80px;top:434px;font-size:11px;line-height:11px;color:#000;letter-spacing:0.310px;">211 # Auto Body/Car Wash</div>
<div class="t" style="left:509.30px;top:434px;font-size:11px;line-height:11px;color:#000;letter-spacing:0.140px;">1 - Comcept Enterprises 01</div>
<div class="t" style="left:691.78px;top:434px;font-size:11px;line-height:11px;color:#000;">7/15/2011</div>
<div class="t" style="left:756.78px;top:434px;font-size:11px;line-height:11px;color:#000;">8/15/2011</div>
<div class="t" style="left:805.30px;top:434px;font-size:11px;line-height:11px;color:#000;letter-spacing:-0.089px;">INVOICE</div>
<div class="t" style="left:857.70px;top:434px;font-size:11px;line-height:11px;color:#000;letter-spacing:0.911px;">Monthly</div>
<div class="t" style="left:938.39px;top:434px;font-size:11px;line-height:11px;color:#000;letter-spacing:-0.250px;">100.00</div>
<div class="t" style="left:196.60px;top:450px;font-size:11.5px;line-height:11.5px;color:#0000a0;letter-spacing:0.259px;text-decoration:underline;">Detail</div>
<div class="t" style="left:232.30px;top:450px;font-size:11px;line-height:11px;color:#000;letter-spacing:-0.035px;">1000209</div>
<div class="t" style="left:283.80px;top:450px;font-size:11px;line-height:11px;color:#000;letter-spacing:0.306px;">123-abc</div>
<div class="t" style="left:353.80px;top:450px;font-size:11px;line-height:11px;color:#000;letter-spacing:0.310px;">211 # Auto Body/Car Wash</div>
<div class="t" style="left:509.30px;top:450px;font-size:11px;line-height:11px;color:#000;letter-spacing:0.140px;">1 - Comcept Enterprises 01</div>
<div class="t" style="left:685.65px;top:450px;font-size:11px;line-height:11px;color:#000;">11/27/2010</div>
<div class="t" style="left:755.96px;top:450px;font-size:11px;line-height:11px;color:#000;">12/4/2010</div>
<div class="t" style="left:805.30px;top:450px;font-size:11px;line-height:11px;color:#000;letter-spacing:-0.089px;">INVOICE</div>
<div class="t" style="left:857.70px;top:450px;font-size:11px;line-height:11px;color:#000;letter-spacing:0.425px;">Weekly</div>
<div class="t" style="left:944.27px;top:450px;font-size:11px;line-height:11px;color:#000;letter-spacing:-0.250px;">67.70</div>
<div class="t" style="left:196.60px;top:466px;font-size:11.5px;line-height:11.5px;color:#0000a0;letter-spacing:0.259px;text-decoration:underline;">Detail</div>
<div class="t" style="left:232.30px;top:466px;font-size:11px;line-height:11px;color:#000;letter-spacing:-0.035px;">1000212</div>
<div class="t" style="left:283.80px;top:466px;font-size:11px;line-height:11px;color:#000;letter-spacing:0.306px;">123-abc</div>
<div class="t" style="left:353.80px;top:466px;font-size:11px;line-height:11px;color:#000;letter-spacing:0.310px;">211 # Auto Body/Car Wash</div>
<div class="t" style="left:509.30px;top:466px;font-size:11px;line-height:11px;color:#000;letter-spacing:0.140px;">1 - Comcept Enterprises 01</div>
<div class="t" style="left:685.65px;top:466px;font-size:11px;line-height:11px;color:#000;">11/27/2010</div>
<div class="t" style="left:755.96px;top:466px;font-size:11px;line-height:11px;color:#000;">12/4/2010</div>
<div class="t" style="left:805.30px;top:466px;font-size:11px;line-height:11px;color:#000;letter-spacing:-0.551px;">CREDIT</div>
<div class="t" style="left:857.70px;top:466px;font-size:11px;line-height:11px;color:#000;letter-spacing:0.425px;">Weekly</div>
<div class="t" style="left:938.39px;top:466px;font-size:11px;line-height:11px;color:#000;letter-spacing:-0.250px;">221.94</div>
<div class="t" style="left:196.60px;top:482px;font-size:11.5px;line-height:11.5px;color:#0000a0;letter-spacing:0.259px;text-decoration:underline;">Detail</div>
<div class="t" style="left:232.30px;top:482px;font-size:11px;line-height:11px;color:#000;letter-spacing:-0.035px;">1000330</div>
<div class="t" style="left:283.80px;top:482px;font-size:11px;line-height:11px;color:#000;letter-spacing:0.306px;">123-abc</div>
<div class="t" style="left:353.80px;top:482px;font-size:11px;line-height:11px;color:#000;letter-spacing:0.310px;">211 # Auto Body/Car Wash</div>
<div class="t" style="left:509.30px;top:482px;font-size:11px;line-height:11px;color:#000;letter-spacing:0.140px;">1 - Comcept Enterprises 01</div>
<div class="t" style="left:685.65px;top:482px;font-size:11px;line-height:11px;color:#000;">11/28/2010</div>
<div class="t" style="left:755.96px;top:482px;font-size:11px;line-height:11px;color:#000;">12/5/2010</div>
<div class="t" style="left:805.30px;top:482px;font-size:11px;line-height:11px;color:#000;letter-spacing:-0.089px;">INVOICE</div>
<div class="t" style="left:857.70px;top:482px;font-size:11px;line-height:11px;color:#000;letter-spacing:0.425px;">Weekly</div>
<div class="t" style="left:944.27px;top:482px;font-size:11px;line-height:11px;color:#000;letter-spacing:-0.250px;">32.52</div>
<div class="t" style="left:177.80px;top:498px;font-size:11.5px;line-height:11.5px;color:#fff;font-weight:bold;letter-spacing:-0.213px;">Page 1 of 3 ( 28 items )</div>
<div class="t" style="left:947.00px;top:498px;font-size:11.5px;line-height:11.5px;color:#fff;font-weight:bold;font-family:'Liberation Serif',serif;">1</div>
<div class="t" style="left:955.00px;top:498px;font-size:11.5px;line-height:11.5px;color:#fff;font-weight:bold;font-family:'Liberation Serif',serif;text-decoration:underline;">2</div>
<div class="t" style="left:964.50px;top:498px;font-size:11.5px;line-height:11.5px;color:#fff;font-weight:bold;font-family:'Liberation Serif',serif;text-decoration:underline;">3</div>
<div class="t" style="left:186.00px;top:520px;font-size:13.33px;line-height:13.33px;color:#000;letter-spacing:-0.158px;">Delete Selected</div>
<div class="t" style="left:830.50px;top:520px;font-size:13.33px;line-height:13.33px;color:#000;letter-spacing:-0.277px;">Run</div>
<div class="t" style="left:884.80px;top:520px;font-size:13.33px;line-height:13.33px;color:#000;letter-spacing:-0.068px;">Return to List</div>
<div class="t" style="left:5.10px;top:553px;font-size:11.5px;line-height:11.5px;color:#000;letter-spacing:-0.362px;">RecurringBillingWorksheet.aspx?BatchID=90</div>
<div class="t" style="left:776.70px;top:553px;font-size:11.5px;line-height:11.5px;color:#000;letter-spacing:-0.267px;">Trusted sites</div>
<div class="t" style="left:965.80px;top:553px;font-size:11.5px;line-height:11.5px;color:#000;letter-spacing:-0.174px;">100%</div>
</div>
</div>
</body></html>
